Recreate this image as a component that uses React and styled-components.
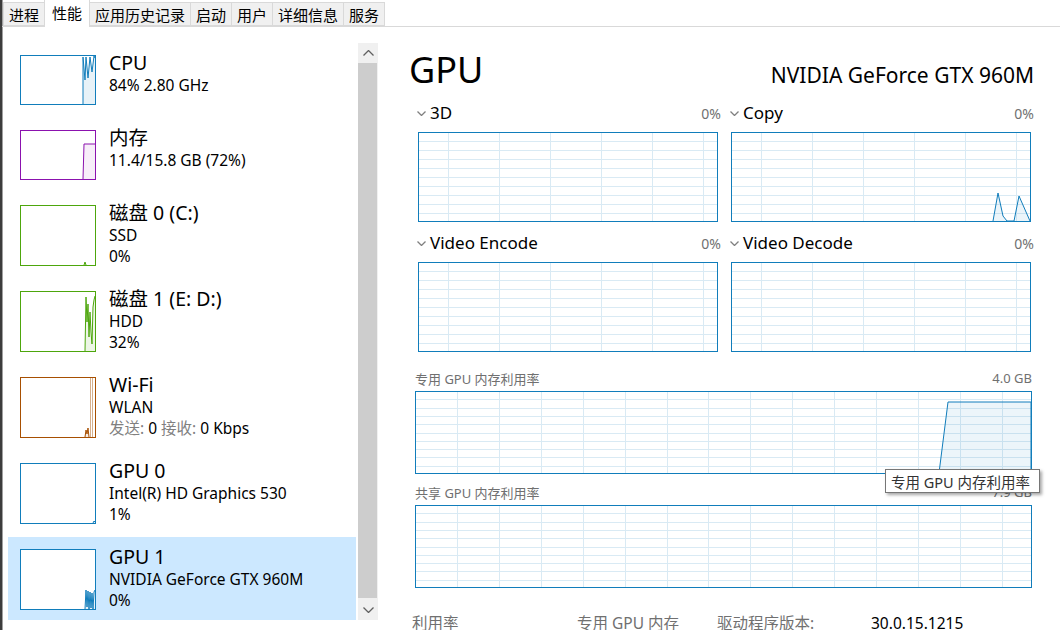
import React from 'react';
import styled, { createGlobalStyle } from 'styled-components';

const FONT = `"Noto Sans", "Noto Sans CJK SC", sans-serif`;
const CJK = `"Noto Sans CJK SC", "Noto Sans", sans-serif`;

const GlobalStyle = createGlobalStyle`
  html, body { margin: 0; padding: 0; background: #fff; }
  body { font-family: ${FONT}; color: #000; }
  * { box-sizing: border-box; }
`;

const Window = styled.div`
  width: 1060px;
  height: 630px;
  overflow: hidden;
  display: flex;
  flex-direction: column;
  border-left: 2px solid #3c3c3c;
  box-shadow: inset 1px 0 #a0a0a0;
  background: #fff;
`;

const TabBar = styled.div`
  height: 27px;
  flex: none;
  display: flex;
  align-items: flex-end;
  padding-left: 2px;
  border-bottom: 1px solid #d9d9d9;
`;

const Tab = styled.div`
  height: ${p => (p.$active ? 28 : 24)}px;
  margin-bottom: ${p => (p.$active ? -1 : 0)}px;
  margin-left: -1px;
  padding: 0 ${p => (p.$active ? 7 : 5)}px ${p => (p.$active ? 3 : 0)}px;
  display: flex;
  align-items: center;
  border: 1px solid #d9d9d9;
  border-bottom: ${p => (p.$active ? 'none' : '1px solid #d9d9d9')};
  background: ${p => (p.$active ? '#fff' : '#f0f0f0')};
  font-family: ${CJK};
  font-size: 15px;
  color: #000;
  position: relative;
  z-index: ${p => (p.$active ? 1 : 0)};
`;

const Body = styled.div`
  flex: 1;
  display: flex;
  min-height: 0;
`;

const Sidebar = styled.div`
  width: 376px;
  flex: none;
  display: flex;
  gap: 2px;
  padding: 16px 0 10px 6px;
`;

const List = styled.div`
  width: 348px;
  display: flex;
  flex-direction: column;
  overflow: hidden;
`;

const Item = styled.div`
  display: flex;
  flex: none;
  gap: 13px;
  padding: 12px 12px 13px;
  background: ${p => (p.$selected ? '#cce8ff' : 'transparent')};
`;

const Thumb = styled.div`
  width: 76px;
  height: ${p => p.$h}px;
  flex: none;
  border: 1px solid ${p => p.$color};
  background: #fff;
  svg { display: block; }
`;

const Info = styled.div`
  display: flex;
  flex-direction: column;
  margin-top: -4px;
  height: ${p => p.$h}px;
  white-space: nowrap;
`;

const Title = styled.div`
  font-size: 19.5px;
  line-height: 24px;
`;

const Sub = styled.div`
  font-size: 15.5px;
  line-height: 21px;
  color: #000;
`;

const Muted = styled.span`
  color: #808080;
`;

const Scrollbar = styled.div`
  width: 20px;
  flex: none;
  display: flex;
  flex-direction: column;
  background: #f0f0f0;
`;

const ScrollBtn = styled.div`
  height: 20px;
  flex: none;
  display: flex;
  align-items: center;
  justify-content: center;
`;

const ScrollThumb = styled.div`
  flex: 1;
  margin: 0 1px 2px 0;
  background: #cdcdcd;
`;

const Main = styled.div`
  flex: 1;
  position: relative;
  display: flex;
  flex-direction: column;
  padding: 23px 28px 0 37px;
  min-width: 0;
  overflow: hidden;
`;

const Header = styled.div`
  flex: none;
  display: flex;
  justify-content: space-between;
  align-items: baseline;
  height: 40px;
`;

const BigTitle = styled.div`
  font-size: 36px;
  line-height: 40px;
  margin-left: -6px;
  font-weight: 400;
`;

const DeviceName = styled.div`
  font-size: 21px;
  line-height: 28px;
  margin-right: -2px;
`;

const EngineGrid = styled.div`
  flex: none;
  margin-top: 12px;
  margin-right: -2px;
  display: grid;
  grid-template-columns: 306px 306px;
  column-gap: 7px;
  row-gap: 10px;
`;

const Engine = styled.div`
  display: flex;
  flex-direction: column;
`;

const EngineHead = styled.div`
  height: 22px;
  margin-bottom: 8px;
  display: flex;
  align-items: center;
  justify-content: space-between;
  padding-left: 2px;
`;

const EngineName = styled.div`
  display: flex;
  align-items: center;
  gap: 4px;
  font-size: 17px;
  line-height: 22px;
`;

const Pct = styled.div`
  font-size: 14px;
  color: #707070;
`;

const ChartBox = styled.div`
  margin-left: ${p => p.$ml || 0}px;
  flex: none;
`;

const ChartSvg = styled.svg`
  display: block;
  flex: none;
`;

const MemHead = styled.div`
  flex: none;
  margin-top: ${p => p.$mt}px;
  height: 18px;
  display: flex;
  justify-content: space-between;
  align-items: center;
  font-size: 13px;
  color: #707070;
  margin-bottom: 4px;
`;

const Stats = styled.div`
  flex: none;
  margin-top: 25px;
  margin-left: -3px;
  display: grid;
  grid-template-columns: 165px 140px 154px 1fr;
  font-size: 15.5px;
  line-height: 20px;
  white-space: nowrap;
`;

const Stat = styled.div`
  color: ${p => (p.$dark ? '#000' : '#707070')};
`;

const Tooltip = styled.div`
  position: absolute;
  left: 507px;
  top: 442px;
  width: 155px;
  height: 24px;
  border: 1px solid #767676;
  background: #fff;
  box-shadow: 2px 2px 3px rgba(0, 0, 0, 0.35);
  font-size: 14.5px;
  display: flex;
  align-items: center;
  padding-left: 5px;
  color: #333;
  white-space: nowrap;
`;

function Chevron({ dir = 'down', color = '#808080', w = 9, h = 5 }) {
  const d = dir === 'down' ? `M0.5 0.5 L${w / 2} ${h - 0.5} L${w - 0.5} 0.5` : `M0.5 ${h - 0.5} L${w / 2} 0.5 L${w - 0.5} ${h - 0.5}`;
  return (
    <svg width={w} height={h} viewBox={`0 0 ${w} ${h}`}>
      <path d={d} fill="none" stroke={color} strokeWidth="1.3" />
    </svg>
  );
}

function ThumbGraph({ w, h, color, fill, points, extra }) {
  const pts = points ? points.split(' ') : [];
  const firstX = pts.length ? pts[0].split(',')[0] : 0;
  const lastX = pts.length ? pts[pts.length - 1].split(',')[0] : 0;
  return (
    <svg width={w} height={h} viewBox={`0 0 ${w} ${h}`}>
      {extra}
      {points && (
        <>
          <polygon points={`${points} ${lastX},${h} ${firstX},${h}`} fill={fill} />
          <polyline points={points} fill="none" stroke={color} strokeWidth="1" />
        </>
      )}
    </svg>
  );
}

function GridChart({ w, h, colStart, colStep, rows, points, ml }) {
  const color = '#117dbb';
  const grid = '#d9eaf4';
  const v = [];
  for (let x = colStart; x < w - 1; x += colStep) v.push(Math.round(x) + 0.5);
  const hz = [];
  for (let k = 1; k < rows; k++) hz.push(Math.round((h * k) / rows) + 0.5);
  return (
    <ChartBox $ml={ml}>
      <ChartSvg width={w} height={h} viewBox={`0 0 ${w} ${h}`}>
        <rect x="0" y="0" width={w} height={h} fill="#fff" />
        {v.map(x => (
          <line key={'v' + x} x1={x} y1="0" x2={x} y2={h} stroke={grid} strokeWidth="1" />
        ))}
        {hz.map(y => (
          <line key={'h' + y} x1="0" y1={y} x2={w} y2={y} stroke={grid} strokeWidth="1" />
        ))}
        {points && (
          <>
            <polygon points={points} fill="rgba(17,125,187,0.08)" />
            <polyline points={points} fill="none" stroke={color} strokeWidth="1" />
          </>
        )}
        <rect x="0.5" y="0.5" width={w - 1} height={h - 1} fill="none" stroke={color} strokeWidth="1" />
      </ChartSvg>
    </ChartBox>
  );
}

const items = [
  {
    key: 'cpu', title: 'CPU', color: '#117dbb', fill: 'rgba(17,125,187,0.1)', h: 50,
    lines: ['84% 2.80 GHz'],
    points: '62,48 62,1 64,24 65,1 67,22 69,1 71,16 73,0 74,2',
  },
  {
    key: 'mem', title: '内存', color: '#8b12ae', fill: 'rgba(139,18,174,0.07)', h: 50,
    lines: ['11.4/15.8 GB (72%)'],
    points: '62,48 63,13 74,13',
  },
  {
    key: 'd0', title: '磁盘 0 (C:)', color: '#4da60c', fill: 'rgba(77,166,12,0.1)', h: 61,
    lines: ['SSD', '0%'],
    points: '63,59 64,56 65,59',
  },
  {
    key: 'd1', title: '磁盘 1 (E: D:)', color: '#4da60c', fill: 'rgba(77,166,12,0.1)', h: 61,
    lines: ['HDD', '32%'],
    points: '64,59 65,5 66,30 67,12 68,45 69,20 70,40 71,52 72,15 73,8 74,4',
  },
  {
    key: 'wifi', title: 'Wi-Fi', color: '#a74f01', fill: 'rgba(167,79,1,0.1)', h: 61,
    lines: ['WLAN', 'net'],
    points: '64,59 65,52 66,56 67,50 68,59',
    extra: (
      <>
        <line x1="69.5" y1="0" x2="69.5" y2="59" stroke="rgba(167,79,1,0.45)" />
        <line x1="71.5" y1="0" x2="71.5" y2="59" stroke="rgba(167,79,1,0.45)" />
      </>
    ),
  },
  {
    key: 'g0', title: 'GPU 0', color: '#117dbb', fill: 'rgba(17,125,187,0.1)', h: 61,
    lines: ['Intel(R) HD Graphics 530', '1%'],
    points: '72,59 73,57 74,58',
  },
  {
    key: 'g1', title: 'GPU 1', color: '#117dbb', fill: 'rgba(17,125,187,0.1)', h: 61, selected: true,
    lines: ['NVIDIA GeForce GTX 960M', '0%'],
    points: '64,59 65,40 66,57 67,41 68,59 69,42 70,58 71,43 72,59 73,42 74,40',
  },
];

const tabs = ['进程', '性能', '应用历史记录', '启动', '用户', '详细信息', '服务'];

const engines = [
  { name: '3D', pct: '0%' },
  { name: 'Copy', pct: '0%', points: '262,89 267,61 272,84 276,89 283,89 288,64 299,89' },
  { name: 'Video Encode', pct: '0%' },
  { name: 'Video Decode', pct: '0%' },
];

export default function App() {
  return (
    <>
      <GlobalStyle />
      <Window>
        <TabBar>
          {tabs.map((t, i) => (
            <Tab key={t} $active={i === 1}>{t}</Tab>
          ))}
        </TabBar>
        <Body>
          <Sidebar>
            <List>
              {items.map(it => (
                <Item key={it.key} $selected={it.selected}>
                  <Thumb $h={it.h} $color={it.color}>
                    <ThumbGraph w={74} h={it.h - 2} color={it.color} fill={it.fill} points={it.points} extra={it.extra} />
                  </Thumb>
                  <Info $h={it.h}>
                    <Title>{it.title}</Title>
                    {it.lines.map(l =>
                      l === 'net' ? (
                        <Sub key={l}>
                          <Muted>发送:</Muted> 0 <Muted>接收:</Muted> 0 Kbps
                        </Sub>
                      ) : (
                        <Sub key={l}>{l}</Sub>
                      )
                    )}
                  </Info>
                </Item>
              ))}
            </List>
            <Scrollbar>
              <ScrollBtn><Chevron dir="up" color="#606060" w={11} h={6} /></ScrollBtn>
              <ScrollThumb />
              <ScrollBtn><Chevron dir="down" color="#606060" w={11} h={6} /></ScrollBtn>
            </Scrollbar>
          </Sidebar>
          <Main>
            <Header>
              <BigTitle>GPU</BigTitle>
              <DeviceName>NVIDIA GeForce GTX 960M</DeviceName>
            </Header>
            <EngineGrid>
              {engines.map(e => (
                <Engine key={e.name}>
                  <EngineHead>
                    <EngineName>
                      <Chevron />
                      {e.name}
                    </EngineName>
                    <Pct>{e.pct}</Pct>
                  </EngineHead>
                  <GridChart w={300} h={90} colStart={30} colStep={51} rows={10} points={e.points} ml={3} />
                </Engine>
              ))}
            </EngineGrid>
            <MemHead $mt={17}>
              <span>专用 GPU 内存利用率</span>
              <span>4.0 GB</span>
            </MemHead>
            <GridChart w={617} h={83} colStart={42} colStep={41.9} rows={10} points="524,82 533,11 616,11 616,82" />
            <MemHead $mt={9}>
              <span>共享 GPU 内存利用率</span>
              <span>7.9 GB</span>
            </MemHead>
            <GridChart w={617} h={83} colStart={42} colStep={41.9} rows={10} />
            <Stats>
              <Stat>利用率</Stat>
              <Stat>专用 GPU 内存</Stat>
              <Stat>驱动程序版本:</Stat>
              <Stat $dark>30.0.15.1215</Stat>
            </Stats>
            <Tooltip>专用 GPU 内存利用率</Tooltip>
          </Main>
        </Body>
      </Window>
    </>
  );
}
